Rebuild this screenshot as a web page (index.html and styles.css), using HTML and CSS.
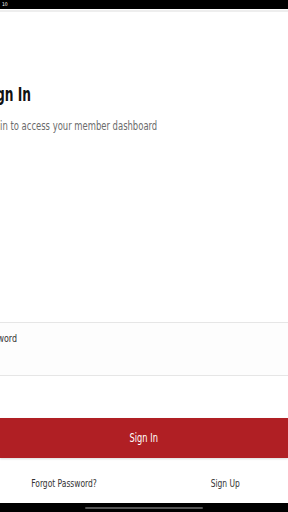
FILE: index.html
```html
<!DOCTYPE html>
<html lang="en">
<head>
<meta charset="utf-8">
<title>Sign In</title>
<link rel="stylesheet" href="styles.css">
</head>
<body>
<div class="status"><span class="time">10</span></div>
<main class="content">
  <h1 class="title"><span class="narrow-left">Sign In</span></h1>
  <p class="subtitle"><span class="narrow-left">Sign in to access your member dashboard</span></p>
  <div class="field">
    <label class="field-label"><span class="narrow-left">Password</span></label>
  </div>
  <button class="submit" type="button"><span class="narrow">Sign In</span></button>
  <div class="links">
    <a class="link"><span class="narrow">Forgot Password?</span></a>
    <a class="link"><span class="narrow">Sign Up</span></a>
  </div>
</main>
<div class="home"><span class="indicator"></span></div>
</body>
</html>
```
FILE: styles.css
```css
html, body {
  margin: 0;
  padding: 0;
}
body {
  width: 288px;
  height: 512px;
  overflow: hidden;
  display: flex;
  flex-direction: column;
  background: #ffffff;
  font-family: "DejaVu Sans Condensed", "Liberation Sans", sans-serif;
}
.narrow-left {
  display: inline-block;
  white-space: nowrap;
  transform-origin: left center;
  transform: scaleX(0.84);
}
.narrow {
  display: inline-block;
  white-space: nowrap;
  transform-origin: center center;
  transform: scaleX(0.8);
}
.status {
  height: 9px;
  background: #000;
  color: #fff;
  font-size: 5px;
  line-height: 9px;
  padding-left: 2px;
  border-bottom: 1px solid #fff;
  box-shadow: 0 2px 0 #eeeeee;
}
.content {
  flex: 1;
  display: flex;
  flex-direction: column;
}
.title {
  margin: 73px 0 0 -17px;
  font-size: 20px;
  line-height: 22px;
  font-weight: bold;
  color: #111;
  white-space: nowrap;
}
.title .narrow-left {
  transform: scaleX(0.68);
}
.subtitle {
  margin: 14px 0 0 -21px;
  font-size: 11.5px;
  line-height: 14px;
  color: #6b6b6b;
  white-space: nowrap;
}
.subtitle .narrow-left {
  transform: scaleX(0.815);
}
.field {
  margin-top: 189px;
  height: 52px;
  border-top: 1px solid #e6e6e6;
  border-bottom: 1px solid #e6e6e6;
  background: #fdfdfd;
}
.field-label {
  display: block;
  margin: 9px 0 0 -20px;
  font-size: 10.5px;
  line-height: 12px;
  color: #333;
  white-space: nowrap;
}
.submit {
  margin-top: 42px;
  height: 40px;
  border: 0;
  padding: 0;
  background: #b01f24;
  color: #fff;
  font-family: inherit;
  font-size: 11.5px;
  box-shadow: 0 1px 2px rgba(0,0,0,0.15);
}
.links {
  display: flex;
  justify-content: space-between;
  padding: 0 44px 0 23px;
  margin-top: 19px;
}
.link {
  font-size: 10.5px;
  line-height: 12px;
  color: #333;
}
.home {
  height: 9px;
  background: #000;
  display: flex;
  justify-content: center;
  align-items: center;
}
.indicator {
  width: 118px;
  height: 2px;
  border-radius: 1px;
  background: #555;
}
```
